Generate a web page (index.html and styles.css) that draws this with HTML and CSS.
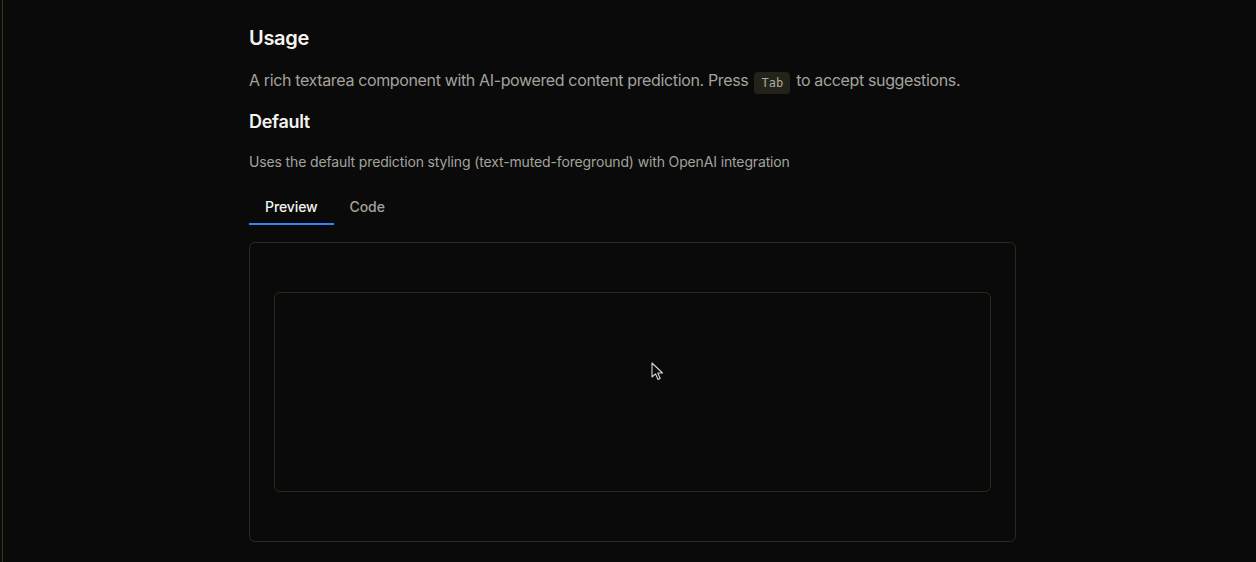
FILE: index.html
```html
<!DOCTYPE html>
<html lang="en">
<head>
<meta charset="utf-8">
<title>Usage</title>
<link rel="stylesheet" href="styles.css">
</head>
<body>
<div class="page">
  <div class="rail"></div>
  <main class="content">
    <h2 class="h-usage">Usage</h2>
    <p class="lead">A rich textarea component with AI-powered content prediction. Press <kbd class="kbd">Tab</kbd> to accept suggestions.</p>
    <h3 class="h-default">Default</h3>
    <p class="desc">Uses the default prediction styling (text-muted-foreground) with OpenAI integration</p>
    <div class="tabs">
      <div class="tab active">Preview</div>
      <div class="tab">Code</div>
    </div>
    <div class="preview">
      <div class="textarea"></div>
    </div>
  </main>
</div>
<svg class="cursor" width="14" height="20" viewBox="0 0 14 20" xmlns="http://www.w3.org/2000/svg">
  <path d="M1 1 L1 15 L4.5 11.8 L7 17.5 L9.2 16.5 L6.8 11 L11.5 11 Z" fill="#0a0a0a" stroke="#d8d8d0" stroke-width="1.1" stroke-linejoin="round"/>
</svg>
</body>
</html>
```

FILE: styles.css
```css
* { box-sizing: border-box; }
html, body {
  margin: 0;
  padding: 0;
  background: #0a0a0b;
  height: 100%;
  overflow: hidden;
}
body {
  font-family: Inter, "Noto Sans", "Liberation Sans", sans-serif;
  color: #f4f4ef;
}
.page {
  display: flex;
  height: 562px;
}
.rail {
  width: 2px;
  flex: none;
  border-right: 1px solid #36361a;
  box-sizing: content-box;
}
.content {
  margin-left: 246px;
  width: 767px;
  padding-top: 24px;
  display: flex;
  flex-direction: column;
}
.h-usage {
  margin: 0;
  font-size: 20px;
  line-height: 28px;
  font-weight: 600;
  letter-spacing: -0.3px;
}
.lead {
  margin: 16px 0 0;
  font-size: 16px;
  line-height: 24px;
  color: #a3a39b;
  letter-spacing: -0.36px;
}
.kbd {
  display: inline-block;
  font-family: "DejaVu Sans Mono", "Liberation Mono", monospace;
  font-size: 12px;
  line-height: 22px;
  height: 22px;
  padding: 0 7px;
  margin: 0 2px;
  background: #23231a;
  color: #aaaaa0;
  border-radius: 4px;
  vertical-align: -1px;
  letter-spacing: 0;
}
.h-default {
  margin: 14px 0 0;
  font-size: 18px;
  line-height: 28px;
  font-weight: 600;
  letter-spacing: -0.3px;
}
.desc {
  margin: 16px 0 0;
  font-size: 14px;
  line-height: 20px;
  color: #a3a39b;
  letter-spacing: -0.14px;
}
.tabs {
  margin-top: 18px;
  display: flex;
  height: 35px;
}
.tab {
  padding: 0 16px;
  font-size: 14px;
  font-weight: 500;
  line-height: 33px;
  color: #a3a39b;
  border-bottom: 2px solid transparent;
  letter-spacing: -0.1px;
}
.tab.active {
  color: #f4f4ef;
  border-bottom-color: #3b82f6;
}
.preview {
  margin-top: 17px;
  height: 300px;
  border: 1px solid #2a2a16;
  border-radius: 6px;
  padding: 49px 24px;
}
.textarea {
  height: 200px;
  border: 1px solid #2a2a18;
  border-radius: 6px;
}
.cursor {
  position: absolute;
  left: 651px;
  top: 362px;
}
```
